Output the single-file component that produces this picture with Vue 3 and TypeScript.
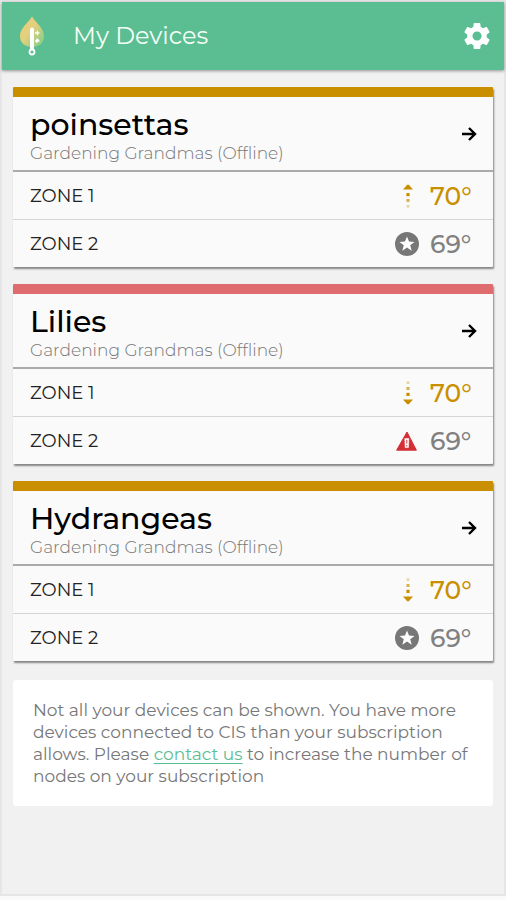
<script setup lang="ts">
type Status = 'rising' | 'falling' | 'ideal' | 'alert'

interface Zone {
  name: string
  temperature: number
  status: Status
}

interface Device {
  name: string
  location: string
  level: 'warning' | 'danger'
  zones: Zone[]
}

const location = 'Gardening Grandmas (Offline)'

const devices: Device[] = [
  {
    name: 'poinsettas',
    location,
    level: 'warning',
    zones: [
      { name: 'ZONE 1', temperature: 70, status: 'rising' },
      { name: 'ZONE 2', temperature: 69, status: 'ideal' },
    ],
  },
  {
    name: 'Lilies',
    location,
    level: 'danger',
    zones: [
      { name: 'ZONE 1', temperature: 70, status: 'falling' },
      { name: 'ZONE 2', temperature: 69, status: 'alert' },
    ],
  },
  {
    name: 'Hydrangeas',
    location,
    level: 'warning',
    zones: [
      { name: 'ZONE 1', temperature: 70, status: 'falling' },
      { name: 'ZONE 2', temperature: 69, status: 'ideal' },
    ],
  },
]

const isTrending = (status: Status): boolean => status === 'rising' || status === 'falling'
</script>

<template>
  <div class="app">
    <header class="topbar">
      <svg class="logo" viewBox="0 0 26 40" aria-hidden="true">
        <defs>
          <linearGradient id="leaf" x1="0" y1="0" x2="1" y2="1">
            <stop offset="0.45" stop-color="#e4cf7d" />
            <stop offset="0.85" stop-color="#93cf87" />
          </linearGradient>
        </defs>
        <path d="M13 0.5C16 6 25 12 25 20C25 27 20 31 13 31C6 31 1 27 1 20C1 12 10 6 13 0.5Z" fill="url(#leaf)" />
        <path d="M13 13.5V34" stroke="#fff" stroke-width="4" stroke-linecap="round" />
        <circle cx="13" cy="36" r="2.5" fill="#5bbd92" stroke="#fff" stroke-width="1.8" />
        <path d="M16 17H20.4M18.4 14.8V19.2M16 25H20.4M17.8 22.8V27M19 22.8V25" stroke="#fff" stroke-width="1.3" />
      </svg>
      <h1 class="title">My Devices</h1>
      <button class="settings" type="button" aria-label="Settings">
        <svg viewBox="2 2 20 20" aria-hidden="true">
          <path
            d="M19.43 12.98c.04-.32.07-.64.07-.98s-.03-.66-.07-.98l2.11-1.65c.19-.15.24-.42.12-.64l-2-3.46c-.12-.22-.39-.3-.61-.22l-2.49 1c-.52-.4-1.08-.73-1.69-.98l-.38-2.65C14.46 2.18 14.25 2 14 2h-4c-.25 0-.46.18-.49.42l-.38 2.65c-.61.25-1.17.59-1.69.98l-2.49-1c-.23-.09-.49 0-.61.22l-2 3.46c-.13.22-.07.49.12.64l2.11 1.65c-.04.32-.07.65-.07.98s.03.66.07.98l-2.11 1.65c-.19.15-.24.42-.12.64l2 3.46c.12.22.39.3.61.22l2.49-1c.52.4 1.08.73 1.69.98l.38 2.65c.03.24.24.42.49.42h4c.25 0 .46-.18.49-.42l.38-2.65c.61-.25 1.17-.59 1.69-.98l2.49 1c.23.09.49 0 .61-.22l2-3.46c.12-.22.07-.49-.12-.64l-2.11-1.65zM12 15.5c-1.93 0-3.5-1.57-3.5-3.5s1.57-3.5 3.5-3.5 3.5 1.57 3.5 3.5-1.57 3.5-3.5 3.5z"
          />
        </svg>
      </button>
    </header>

    <main class="content">
      <article v-for="device in devices" :key="device.name" class="card" :class="device.level">
        <div class="card-head">
          <div>
            <h2 class="name">{{ device.name }}</h2>
            <p class="location">{{ device.location }}</p>
          </div>
          <button class="open" type="button" :aria-label="`Open ${device.name}`">
            <svg viewBox="0 0 16 16" aria-hidden="true">
              <path d="M1 8H14M8 2L14 8L8 14" />
            </svg>
          </button>
        </div>
        <ul class="zones">
          <li v-for="zone in device.zones" :key="zone.name" class="zone">
            <span class="zone-name">{{ zone.name }}</span>
            <svg
              v-if="isTrending(zone.status)"
              class="icon trend"
              :class="{ down: zone.status === 'falling' }"
              viewBox="0 0 24 24"
              aria-hidden="true"
            >
              <path d="M8 5.4L12 1Q13 0.2 14 1L18 5.4Z" />
              <rect x="11.4" y="9" width="3.2" height="3.2" />
              <rect x="11.5" y="15" width="3" height="3" opacity="0.7" />
              <rect x="11.6" y="21" width="2.8" height="2.6" opacity="0.35" />
            </svg>
            <svg v-else-if="zone.status === 'ideal'" class="icon" viewBox="0 0 24 24" aria-hidden="true">
              <circle cx="12" cy="12" r="12" fill="#777" />
              <path
                d="M12 4.4L14 9.6L19.5 9.9L15.2 13.3L16.7 18.7L12 15.6L7.3 18.7L8.8 13.3L4.5 9.9L10 9.6Z"
                fill="#fff"
              />
            </svg>
            <svg v-else class="icon" viewBox="0 0 24 24" aria-hidden="true">
              <path d="M12 3L21.4 21.2H1.6Z" fill="#d32f35" stroke="#d32f35" stroke-linejoin="round" />
              <path d="M9.8 9.6H13.8L13.4 18.6H10.2Z" fill="#fff" stroke="#fff" stroke-width="0.6" stroke-linejoin="round" />
              <path d="M11.8 10.8V14.6M11.8 16V17.4" stroke="#d32f35" stroke-width="1" />
            </svg>
            <span class="temperature" :class="{ trending: isTrending(zone.status) }">{{ zone.temperature }}°</span>
          </li>
        </ul>
      </article>

      <p class="notice">
        Not all your devices can be shown. You have more devices connected to CIS than your subscription allows. Please
        <a href="#contact">contact us</a> to increase the number of nodes on your subscription
      </p>
    </main>
  </div>
</template>

<style>
body {
  background: #fafafa;
}
</style>

<style scoped>
.app {
  box-sizing: border-box;
  min-height: calc(100vh - 4px);
  border: 2px solid #e6e6e6;
  background: #f1f1f1;
  font-family: Montserrat, Inter, sans-serif;
  color: #222;
}

h1,
h2,
p,
ul {
  margin: 0;
  padding: 0;
  font-weight: 400;
}

button {
  display: flex;
  padding: 0;
  border: 0;
  background: none;
  cursor: pointer;
}

.topbar {
  display: flex;
  align-items: center;
  height: 68px;
  padding: 0 14px 0 17px;
  background: #5bbd92;
  box-shadow: 0 1px 3px rgba(0, 0, 0, 0.4);
}

.logo {
  width: 26px;
  height: 40px;
}

.title {
  flex: 1;
  margin-left: 28px;
  font-size: 24px;
  line-height: 32px;
  color: #f4fff6;
}

.settings svg {
  width: 26px;
  height: 26px;
  fill: #fff;
}

.content {
  display: flex;
  flex-direction: column;
  gap: 17px;
  padding: 17px 11px;
}

.card {
  border-top: 10px solid #c98f00;
  border-radius: 1px;
  background: #fafafa;
  box-shadow: 1px 2px 2px rgba(0, 0, 0, 0.45);
}

.card.danger {
  border-top-color: #de6b6e;
}

.card-head {
  display: flex;
  align-items: center;
  justify-content: space-between;
  height: 73px;
  padding: 0 16px 0 17px;
  border-bottom: 2px solid #aaa;
}

.name {
  padding-top: 2px;
  font-size: 30px;
  line-height: 36px;
  font-weight: 500;
  color: #000;
}

.location {
  font-size: 17px;
  line-height: 20px;
  font-weight: 300;
  color: #777;
}

.open svg {
  width: 16px;
  height: 16px;
  fill: none;
  stroke: #000;
  stroke-width: 2.4;
}

.zones {
  list-style: none;
}

.zone {
  display: flex;
  align-items: center;
  height: 47px;
  padding: 0 23px 0 17px;
}

.zone + .zone {
  border-top: 1px solid #d5d5d5;
}

.zone-name {
  flex: 1;
  font-size: 18px;
}

.icon {
  width: 24px;
  height: 24px;
}

.trend {
  fill: #c98f00;
}

.trend.down {
  transform: rotate(180deg) scaleX(-1);
}

.temperature {
  width: 40px;
  margin-left: 11px;
  font-size: 25px;
  font-weight: 500;
  white-space: nowrap;
  color: #808080;
}

.temperature.trending {
  color: #c98f00;
}

.notice {
  margin-top: 2px;
  padding: 19px 20px;
  border-radius: 3px;
  background: #fff;
  font-size: 17px;
  line-height: 22px;
  color: #777;
}

.notice a {
  color: #5bbd92;
  text-underline-offset: 3px;
}
</style>
